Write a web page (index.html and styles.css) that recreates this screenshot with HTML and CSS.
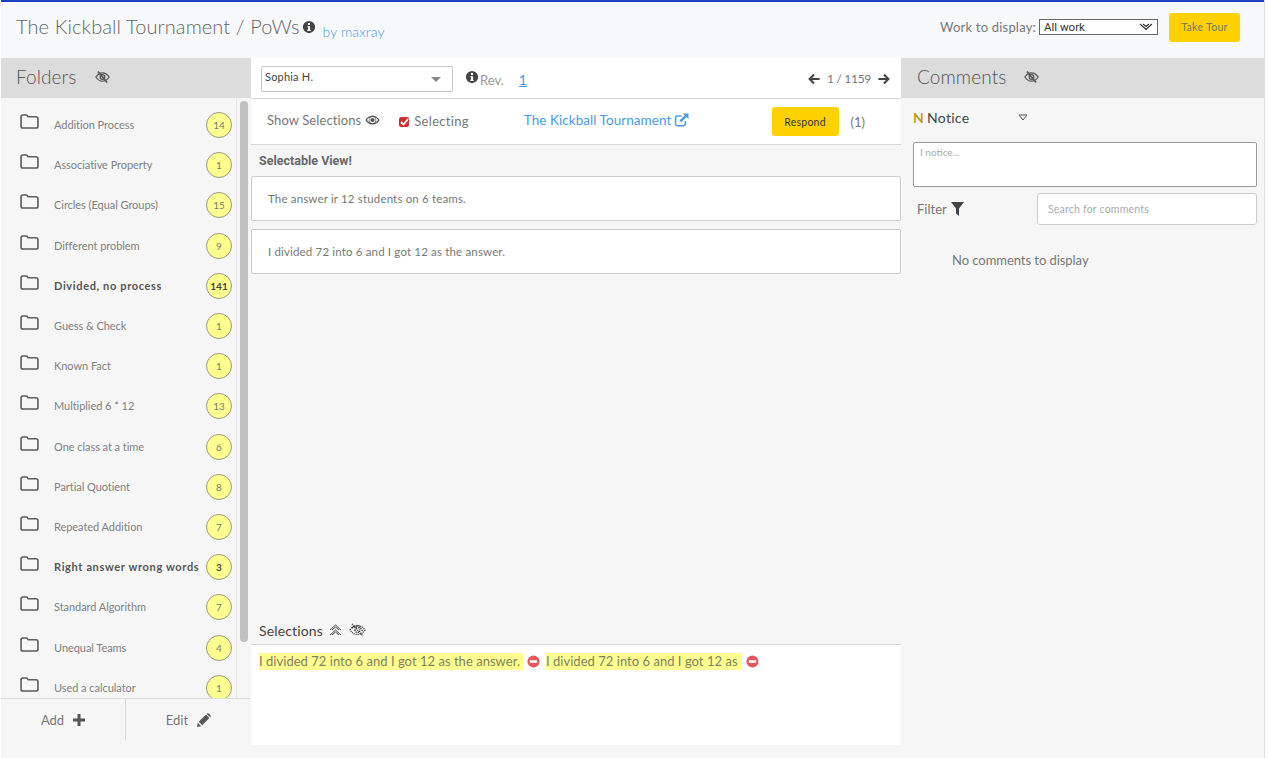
FILE: index.html
```html
<!DOCTYPE html>
<html lang="en">
<head>
    <meta charset="UTF-8">
    <title>The Kickball Tournament / PoWs</title>
    <link rel="stylesheet" href="styles.css">
</head>
<body>
    <svg class="defs" width="0" height="0">
        <symbol id="i-info" viewBox="0 0 16 16"><path fill-rule="evenodd" d="M8 1a7 7 0 1 0 0 14A7 7 0 0 0 8 1zM6.800 3.400h2.400v2.200H6.800zM6 7h3.200v4.200H10v1.400H6v-1.400h.9V8.400H6z"/></symbol>
        <symbol id="i-folder" viewBox="0 0 20 16"><path fill="none" stroke="currentColor" stroke-width="1.700" stroke-linejoin="round" d="M1 3q0-2 2-2h3.500q1 0 1.500 1l.6 1h8.400q2 0 2 2v8q0 2-2 2H3q-2 0-2-2z"/></symbol>
        <symbol id="i-eye-off" viewBox="0 0 18 16"><path fill="none" stroke="currentColor" stroke-width="1.500" d="M1 8q3.500-5 8-5t8 5q-3.500 5-8 5T1 8z"/><circle cx="9" cy="8" r="2.800" fill="none" stroke="currentColor" stroke-width="1.500"/><path stroke="currentColor" stroke-width="2" d="M3.500 1.500l11 13"/></symbol>
        <symbol id="i-eye" viewBox="0 0 18 14"><path fill-rule="evenodd" d="M9 1.500C5 1.500 2 4.200.5 7 2 9.800 5 12.500 9 12.500s7-2.700 8.500-5.500C16 4.200 13 1.500 9 1.500zM9 3.300a3.700 3.700 0 1 1 0 7.400 3.700 3.700 0 0 1 0-7.400zM2.300 7Q3.500 5.200 5.400 4.100a5 5 0 0 0 0 5.800Q3.500 8.800 2.300 7zm13.400 0q-1.200 1.800-3.100 2.900a5 5 0 0 0 0-5.800Q14.500 5.200 15.700 7z"/><circle cx="9" cy="7" r="2.500"/></symbol>
        <symbol id="i-left" viewBox="0 0 14 14"><path fill="none" stroke="currentColor" stroke-width="2.400" d="M7 1.800L1.900 7 7 12.200M2 7h11.500"/></symbol>
        <symbol id="i-right" viewBox="0 0 14 14"><path fill="none" stroke="currentColor" stroke-width="2.400" d="M7 1.800L12.100 7 7 12.200M12 7H.5"/></symbol>
        <symbol id="i-link" viewBox="0 0 16 16"><path fill="none" stroke="currentColor" stroke-width="1.700" d="M12.500 9v3.500q0 2-2 2H3.200q-2 0-2-2V5.500q0-2 2-2H8"/><path d="M9.500.5H16v6.500l-2.300-2.300-6 6-2-2 6-6z"/></symbol>
        <symbol id="i-stop" viewBox="0 0 14 14"><circle cx="7" cy="7" r="6.500" fill="#e05a5f"/><rect x="3" y="5.600" width="8" height="2.800" rx=".5" fill="#fff"/></symbol>
    </svg>

    <div class="app">
        <header class="topbar">
            <div class="title-wrap">
                <h1 class="title">The Kickball Tournament / PoWs</h1>
                <svg class="ic ic-title"><use href="#i-info"/></svg>
                <a class="by">by maxray</a>
            </div>
            <div class="top-right">
                <span class="work-label">Work to display:</span>
                <div class="work-select">All work <svg width="14" height="8" viewBox="0 0 14 8"><path fill="none" stroke="#333" stroke-width="1.200" d="M1 1l6 5.500L13 1M4 1l3 2.500L10 1"/></svg></div>
                <button class="btn tour">Take Tour</button>
            </div>
        </header>

        <main class="columns">
            <aside class="folders">
                <div class="panel-head">
                    <span>Folders</span>
                    <svg class="ic ic-hide"><use href="#i-eye-off"/></svg>
                </div>
                <div class="folder-body">
                    <ul class="folder-list">
                        <li class="folder"><svg class="ic-folder"><use href="#i-folder"/></svg><span class="folder-name">Addition Process</span><span class="count">14</span></li>
                        <li class="folder"><svg class="ic-folder"><use href="#i-folder"/></svg><span class="folder-name">Associative Property</span><span class="count">1</span></li>
                        <li class="folder"><svg class="ic-folder"><use href="#i-folder"/></svg><span class="folder-name">Circles (Equal Groups)</span><span class="count">15</span></li>
                        <li class="folder"><svg class="ic-folder"><use href="#i-folder"/></svg><span class="folder-name">Different problem</span><span class="count">9</span></li>
                        <li class="folder bold"><svg class="ic-folder"><use href="#i-folder"/></svg><span class="folder-name">Divided, no process</span><span class="count">141</span></li>
                        <li class="folder"><svg class="ic-folder"><use href="#i-folder"/></svg><span class="folder-name">Guess &amp; Check</span><span class="count">1</span></li>
                        <li class="folder"><svg class="ic-folder"><use href="#i-folder"/></svg><span class="folder-name">Known Fact</span><span class="count">1</span></li>
                        <li class="folder"><svg class="ic-folder"><use href="#i-folder"/></svg><span class="folder-name">Multiplied 6 * 12</span><span class="count">13</span></li>
                        <li class="folder"><svg class="ic-folder"><use href="#i-folder"/></svg><span class="folder-name">One class at a time</span><span class="count">6</span></li>
                        <li class="folder"><svg class="ic-folder"><use href="#i-folder"/></svg><span class="folder-name">Partial Quotient</span><span class="count">8</span></li>
                        <li class="folder"><svg class="ic-folder"><use href="#i-folder"/></svg><span class="folder-name">Repeated Addition</span><span class="count">7</span></li>
                        <li class="folder bold"><svg class="ic-folder"><use href="#i-folder"/></svg><span class="folder-name">Right answer wrong words</span><span class="count">3</span></li>
                        <li class="folder"><svg class="ic-folder"><use href="#i-folder"/></svg><span class="folder-name">Standard Algorithm</span><span class="count">7</span></li>
                        <li class="folder"><svg class="ic-folder"><use href="#i-folder"/></svg><span class="folder-name">Unequal Teams</span><span class="count">4</span></li>
                        <li class="folder"><svg class="ic-folder"><use href="#i-folder"/></svg><span class="folder-name">Used a calculator</span><span class="count">1</span></li>
                    </ul>
                    <div class="scroll-track"><div class="scroll-thumb"></div></div>
                </div>
                <div class="folder-foot">
                    <div class="foot-btn">Add <svg width="12" height="12" viewBox="0 0 12 12"><path d="M4.500 0h3v4.500H12v3H7.500V12h-3V7.500H0v-3h4.500z"/></svg></div>
                    <div class="foot-btn">Edit <svg width="14" height="14" viewBox="0 0 14 14"><path d="M0 14l.8-4.200 3.400 3.400zM1.800 8.800L9 1.600l3.400 3.400-7.200 7.200zM10 .6q.9-.9 1.800 0l1.600 1.600q.9.9 0 1.800l-.3.300L9.700 .9z"/></svg></div>
                </div>
            </aside>

            <section class="workspace">
                <div class="student-bar">
                    <div class="student-select">Sophia H.<span class="caret"></span></div>
                    <svg class="ic ic-rev"><use href="#i-info"/></svg>
                    <span class="rev">Rev.</span>
                    <a class="rev-num">1</a>
                    <div class="pager">
                        <svg class="ic-arrow"><use href="#i-left"/></svg>
                        <span>1 / 1159</span>
                        <svg class="ic-arrow"><use href="#i-right"/></svg>
                    </div>
                </div>
                <div class="tool-bar">
                    <span class="show-sel">Show Selections</span>
                    <svg class="ic-eye"><use href="#i-eye"/></svg>
                    <span class="check"><svg width="9" height="8" viewBox="0 0 9 8"><path fill="none" stroke="#fff" stroke-width="1.800" d="M1 4l2.500 2.500L8 1"/></svg></span>
                    <span class="selecting">Selecting</span>
                    <a class="problem-link">The Kickball Tournament</a>
                    <svg class="ic-link"><use href="#i-link"/></svg>
                    <button class="btn respond">Respond</button>
                    <span class="resp-count">(1)</span>
                </div>
                <div class="view">
                    <h4 class="view-title">Selectable View!</h4>
                    <div class="answer answer-first">The answer ir 12 students on 6 teams.</div>
                    <div class="answer">I divided 72 into 6 and I got 12 as the answer.</div>
                </div>
                <div class="sel-head">
                    <span>Selections</span>
                    <svg width="13" height="14" viewBox="0 0 13 14"><path fill="none" stroke="#444" d="M1 7l5.500-5L12 7M1 12l5.500-5 5.500 5M3 7l3.500-3L10 7M3 12l3.500-3 3.500 3"/></svg>
                    <svg class="ic-dither" width="17" height="14" viewBox="0 0 17 14"><path fill="none" stroke="#222" stroke-width="1.300" stroke-dasharray="1 1" d="M1 7q3-4.500 7.500-4.500T16 7q-3 4.500-7.500 4.500T1 7zM3 5q3-2 5.500-2T14 9M3 1l11 12M6 7a2.500 2.500 0 1 0 5 0 2.500 2.500 0 1 0-5 0"/></svg>
                </div>
                <div class="sel-body">
                    <mark class="hl">I divided 72 into 6 and I got 12 as the answer.</mark>
                    <svg class="ic-stop"><use href="#i-stop"/></svg>
                    <mark class="hl hl-two">I divided 72 into 6 and I got 12 as</mark>
                    <svg class="ic-stop"><use href="#i-stop"/></svg>
                </div>
            </section>

            <aside class="comments">
                <div class="panel-head">
                    <span>Comments</span>
                    <svg class="ic ic-hide"><use href="#i-eye-off"/></svg>
                </div>
                <div class="comments-body">
                    <div class="notice-row">
                        <span class="notice-n">N</span>
                        <span class="notice">Notice</span>
                        <svg width="10" height="7" viewBox="0 0 10 7"><path fill="none" stroke="#555" d="M1 1h8L5 6z"/></svg>
                    </div>
                    <div class="notice-box">I notice...</div>
                    <div class="filter-row">
                        <span class="filter">Filter</span>
                        <svg width="13" height="14" viewBox="0 0 13 14"><path fill="#444" d="M0 0h13L8 6.500V14L5 11.500v-5z"/></svg>
                        <div class="search">Search for comments</div>
                    </div>
                    <p class="empty">No comments to display</p>
                </div>
            </aside>
        </main>
    </div>
</body>
</html>
```

FILE: styles.css
```css
* {
    box-sizing: border-box;
}
html, body {
    height: 100%;
}
body {
    margin: 0;
    background-color: #fff;
    font-family: "Lato", "Open Sans", sans-serif;
    color: #777;
    overflow: hidden;
}
a {
    color: #4a9be8;
}
.defs {
    display: block;
    height: 0;
}
.app {
    width: 1264px;
    height: 758px;
    margin-left: 1px;
    border-right: 1px solid #ddd;
    background-color: #f6f6f6;
}
.topbar {
    height: 58px;
    border-top: 2px solid #1c3fc4;
    background-color: #f7f8f9;
    display: flex;
    justify-content: space-between;
    align-items: center;
    padding: 0 24px 6px 15px;
}
.title-wrap {
    display: flex;
    align-items: center;
}
.title {
    margin: -2px 0 0;
    font-size: 20px;
    font-weight: 300;
    letter-spacing: 0.1px;
    color: #666;
}
.ic {
    fill: #444;
    color: #555;
}
.ic-title {
    width: 14px;
    height: 14px;
    margin-left: 2px;
}
.by {
    margin: 8px 0 0 7px;
    font-size: 14px;
    font-weight: 300;
    letter-spacing: 0.1px;
}
.top-right {
    display: flex;
    align-items: center;
}
.work-label {
    font-size: 13px;
    letter-spacing: 0.2px;
}
.work-select {
    width: 119px;
    height: 16px;
    margin: 0 11px 0 3px;
    padding: 0 4px;
    border: 1px solid #666;
    background-color: #fff;
    font-family: "Roboto", sans-serif;
    font-size: 11.500px;
    line-height: 14px;
    color: #333;
    display: flex;
    justify-content: space-between;
    align-items: center;
}
.btn {
    border: none;
    border-radius: 3px;
    background-color: #ffd100;
    font-family: inherit;
}
.tour {
    width: 71px;
    height: 29px;
    font-size: 10.500px;
    letter-spacing: 0.3px;
    color: #776;
}
.columns {
    height: 700px;
    display: grid;
    grid-template-columns: 250px 650px 363px;
}
.panel-head {
    height: 40px;
    padding: 0 0 3px 15px;
    background-color: #dcdcdc;
    display: flex;
    align-items: center;
    font-size: 19px;
    font-weight: 300;
    letter-spacing: 0.1px;
    color: #555;
}
.comments .panel-head {
    padding-left: 16px;
}
.ic-hide {
    width: 15px;
    height: 14px;
    margin-left: 18px;
}
.folders {
    display: flex;
    flex-direction: column;
    height: 682px;
}
.folder-body {
    flex: 1;
    min-height: 0;
    display: flex;
}
.folder-list {
    width: 236px;
    margin: 0;
    padding: 7px 0 0;
    list-style: none;
    border-right: 1px solid #e4e4e4;
    overflow: hidden;
}
.folder {
    height: 40.200px;
    padding-left: 19px;
    display: flex;
    align-items: center;
}
.ic-folder {
    flex: none;
    width: 19px;
    height: 15px;
    margin: -7px 15px 0 0;
    color: #5c5c5c;
}
.folder-name {
    flex: 1;
    margin-top: -1px;
    font-size: 11px;
    letter-spacing: -0.05px;
    white-space: nowrap;
    color: #808080;
}
.bold .folder-name {
    font-weight: 700;
    letter-spacing: 0.65px;
    color: #555;
}
.count {
    flex: none;
    width: 26px;
    height: 26px;
    margin-right: 4px;
    border: 1px solid #999980;
    border-radius: 50%;
    background-color: #ffff90;
    font-size: 10px;
    line-height: 24px;
    text-align: center;
}
.bold .count {
    font-weight: 700;
    color: #444;
}
.scroll-track {
    width: 14px;
    padding: 3px 3px 0;
}
.scroll-thumb {
    width: 8px;
    height: 541px;
    border-radius: 4px;
    background-color: #c0c0c0;
}
.folder-foot {
    height: 42px;
    border-top: 1px solid #ddd;
    display: grid;
    grid-template-columns: 124px 1fr;
}
.foot-btn {
    display: flex;
    justify-content: center;
    align-items: center;
    gap: 9px;
    font-size: 13px;
    fill: #555;
}
.foot-btn + .foot-btn {
    border-left: 1px solid #ddd;
}
.workspace {
    height: 687px;
    display: flex;
    flex-direction: column;
}
.student-bar {
    height: 41px;
    padding: 8px 11px 0 10px;
    background-color: #fff;
    border-bottom: 1px solid #d8d8d8;
    display: flex;
    align-items: flex-start;
}
.student-select {
    position: relative;
    width: 192px;
    height: 26px;
    padding: 3px 3px;
    border: 1px solid #c4c4c4;
    border-radius: 2px;
    font-size: 11px;
    letter-spacing: 0.2px;
    color: #444;
}
.caret {
    position: absolute;
    top: 10px;
    right: 11px;
    border: 5px solid transparent;
    border-top-color: #888;
    border-bottom: 0;
}
.ic-rev {
    width: 14px;
    height: 14px;
    margin: 4px 0 0 12px;
}
.rev {
    margin: 6px 0 0 1px;
    font-size: 13px;
    color: #999;
}
.rev-num {
    margin: 5px 0 0 15px;
    font-size: 14px;
    text-decoration: underline;
}
.pager {
    margin: 5px 0 0 auto;
    display: flex;
    align-items: center;
    gap: 7px;
    font-size: 12px;
    letter-spacing: -0.3px;
    color: #777;
}
.ic-arrow {
    width: 12px;
    height: 12px;
    color: #444;
}
.tool-bar {
    height: 46px;
    padding: 0 36px 0 16px;
    background-color: #fff;
    border-bottom: 1px solid #d8d8d8;
    display: flex;
    align-items: center;
    font-size: 13px;
}
.show-sel {
    margin-bottom: 3px;
    letter-spacing: 0.1px;
}
.ic-eye {
    width: 15px;
    height: 12px;
    margin: -4px 0 0 4px;
    fill: #555;
}
.check {
    width: 10px;
    height: 10px;
    margin-left: 19px;
    border-radius: 2px;
    background-color: #d0332f;
    display: flex;
    align-items: center;
    justify-content: center;
}
.selecting {
    margin: 0 0 1px 5px;
    letter-spacing: 0.3px;
}
.problem-link {
    margin: 0 0 3px 55px;
    font-size: 13.500px;
    letter-spacing: 0.05px;
    color: #4a9be8;
}
.ic-link {
    width: 15px;
    height: 14px;
    margin: 0 0 3px 3px;
    color: #4a9be8;
    fill: #4a9be8;
}
.respond {
    width: 67px;
    height: 29px;
    margin-left: auto;
    font-size: 10.500px;
    letter-spacing: 0.25px;
    color: #333;
}
.resp-count {
    margin-left: 12px;
    color: #777;
}
.view {
    flex: 1;
    padding-top: 8px;
}
.view-title {
    margin: 0 0 7px 8px;
    height: 16px;
    font-family: "Roboto", sans-serif;
    font-size: 12.500px;
    font-weight: 700;
    line-height: 16px;
    color: #666;
}
.answer {
    height: 45px;
    padding-left: 16px;
    background-color: #fff;
    border: 1px solid #ccc;
    border-radius: 2px;
    display: flex;
    align-items: center;
    font-size: 11.500px;
    letter-spacing: 0.16px;
}
.answer-first {
    margin-bottom: 8px;
}
.sel-head {
    height: 27px;
    padding: 0 0 2px 8px;
    border-bottom: 1px solid #d4d4d4;
    display: flex;
    align-items: center;
    gap: 6px;
    font-size: 14px;
    letter-spacing: 0.15px;
    color: #444;
}
.ic-dither {
    margin-left: 1px;
}
.sel-body {
    height: 100px;
    padding: 8px 8px 0;
    background-color: #fff;
    font-size: 13px;
    line-height: 17px;
    letter-spacing: 0.03px;
    display: flex;
    align-items: flex-start;
}
.hl {
    background-color: #ffff90;
    color: #808060;
    padding-right: 3px;
}
.hl-two {
    margin-left: 6px;
    padding-right: 4px;
}
.ic-stop {
    flex: none;
    width: 13px;
    height: 13px;
    margin: 2px 0 0 4px;
}
.comments-body {
    padding: 0 7px 0 12px;
}
.notice-row {
    height: 38px;
    margin-bottom: 6px;
    display: flex;
    align-items: center;
    font-size: 14px;
    letter-spacing: 0.3px;
}
.notice-n {
    font-weight: 700;
    color: #c49a1c;
    width: 14px;
}
.notice {
    width: 91px;
    color: #444;
}
.notice-box {
    height: 45px;
    padding: 3px 6px;
    background-color: #fff;
    border: 1px solid #999;
    border-radius: 2px;
    font-size: 10px;
    color: #aaa;
}
.filter-row {
    margin-top: 6px;
    padding-left: 4px;
    display: flex;
    align-items: center;
    font-size: 13px;
}
.filter {
    margin-right: 4px;
}
.search {
    width: 220px;
    height: 32px;
    margin-left: auto;
    padding: 0 10px;
    background-color: #fff;
    border: 1px solid #ccc;
    border-radius: 3px;
    font-size: 10.500px;
    letter-spacing: 0.2px;
    line-height: 30px;
    color: #aaa;
}
.empty {
    margin: 27px 0 0 39px;
    font-size: 13px;
    letter-spacing: -0.05px;
}
```
